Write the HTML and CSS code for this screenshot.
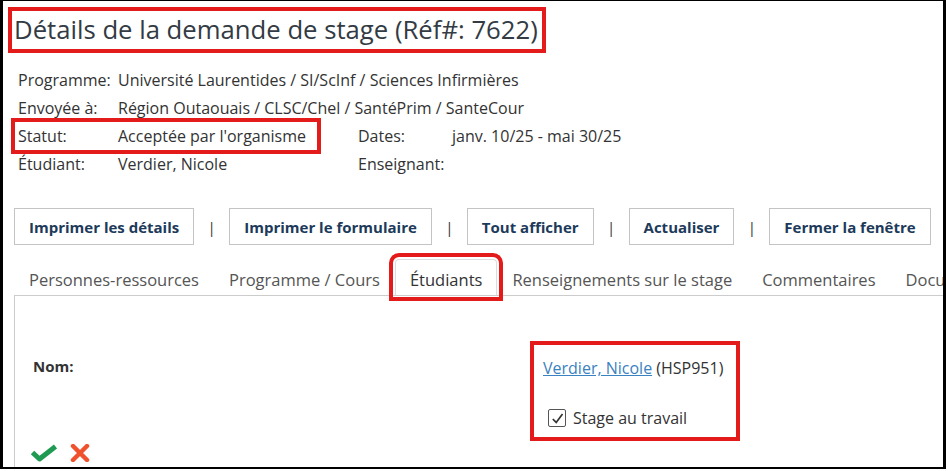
FILE: index.html
```html
<!DOCTYPE html>
<html lang="fr">
<head>
    <meta charset="UTF-8">
    <title>Détails de la demande de stage</title>
    <link rel="stylesheet" href="styles.css">
</head>
<body>
    <div class="frame">
        <h1 class="title"><span class="hl">Détails de la demande de stage (Réf#: 7622)</span></h1>

        <div class="info">
            <div class="row">
                <span class="lbl">Programme:</span>
                <span>Université Laurentides / SI/ScInf / Sciences Infirmières</span>
            </div>
            <div class="row">
                <span class="lbl">Envoyée à:</span>
                <span>Région Outaouais / CLSC/Chel / SantéPrim / SanteCour</span>
            </div>
            <div class="row">
                <div class="col hl statut">
                    <span class="lbl">Statut:</span>
                    <span>Acceptée par l'organisme</span>
                </div>
                <span class="lbl2">Dates:</span>
                <span>janv. 10/25 - mai 30/25</span>
            </div>
            <div class="row">
                <div class="col">
                    <span class="lbl">Étudiant:</span>
                    <span>Verdier, Nicole</span>
                </div>
                <span class="lbl2">Enseignant:</span>
                <span></span>
            </div>
        </div>

        <div class="actions">
            <button>Imprimer les détails</button>
            <span class="sep">|</span>
            <button>Imprimer le formulaire</button>
            <span class="sep">|</span>
            <button>Tout afficher</button>
            <span class="sep">|</span>
            <button>Actualiser</button>
            <span class="sep">|</span>
            <button>Fermer la fenêtre</button>
        </div>

        <ul class="tabs">
            <li>Personnes-ressources</li>
            <li>Programme / Cours</li>
            <li class="active hl">Étudiants</li>
            <li>Renseignements sur le stage</li>
            <li>Commentaires</li>
            <li>Documents</li>
        </ul>

        <div class="panel">
            <div class="field">
                <span class="field-lbl">Nom:</span>
                <div class="field-val hl">
                    <p><a href="#">Verdier, Nicole</a> (HSP951)</p>
                    <label class="check">
                        <span class="box">
                            <svg width="13" height="13" viewBox="0 0 13 13"><path d="M1.8 7 L5.2 10.4 L11.5 2" fill="none" stroke="#333" stroke-width="1.7"/></svg>
                        </span>
                        Stage au travail
                    </label>
                </div>
            </div>
            <div class="icons">
                <svg width="28" height="18" viewBox="0 0 28 18"><path d="M2.5 8.5 L9.5 15 L25.5 2.5" fill="none" stroke="#1f9a52" stroke-width="5" stroke-linejoin="round"/></svg>
                <svg width="20" height="18" viewBox="0 0 20 18"><path d="M3 2 L17 16 M17 2 L3 16" fill="none" stroke="#f0522e" stroke-width="4.5" stroke-linecap="round"/></svg>
            </div>
        </div>
    </div>
</body>
</html>
```

FILE: styles.css
```css
body {
    margin: 0;
    font-family: "Open Sans", sans-serif;
    color: #333;
    background: #fff;
}
.frame {
    width: 940px;
    height: 466px;
    border-style: solid;
    border-color: #000;
    border-width: 1px 3px 2px 3px;
    overflow: hidden;
}
.hl {
    outline: 4px solid #e31b1b;
}
.title {
    margin: 12px 0 0 11px;
    font-size: 25.7px;
    font-weight: normal;
    line-height: 34px;
    color: #333b44;
}
.title .hl {
    display: inline-block;
    padding-right: 2px;
    outline-offset: 2px;
}
.info {
    margin: 19px 0 0 15px;
    font-size: 16px;
}
.row {
    display: flex;
    height: 28px;
    align-items: center;
    white-space: nowrap;
}
.lbl {
    display: inline-block;
    width: 100px;
}
.col {
    width: 340px;
    display: flex;
    align-items: center;
}
.statut {
    width: 296px;
    margin-right: 44px;
    outline-offset: 3px;
}
.lbl2 {
    display: inline-block;
    width: 94px;
}
.actions {
    display: flex;
    align-items: center;
    margin: 30px 0 0 11px;
}
.actions button {
    height: 37px;
    padding: 0 14px;
    background: #fff;
    border: 1px solid #c4c4c4;
    font-family: inherit;
    font-size: 15px;
    font-weight: bold;
    color: #1d3a5a;
}
.sep {
    width: 35px;
    text-align: center;
    color: #333;
    font-size: 15px;
}
.tabs {
    list-style: none;
    display: flex;
    margin: 14px 0 0 11px;
    padding: 0;
    font-size: 16.5px;
    line-height: 22px;
    color: #555;
    white-space: nowrap;
}
.tabs li {
    padding: 9px 14px 4px;
    border: 1px solid transparent;
    border-bottom: none;
}
.tabs .active {
    border-color: #ddd;
    border-radius: 4px 4px 0 0;
    color: #333;
    outline-offset: 2px;
}
.panel {
    margin-left: 11px;
    border-top: 1px solid #ccc;
    border-left: 1px solid #ccc;
    height: 200px;
    padding: 0 0 0 18px;
}
.field {
    display: flex;
    padding-top: 45px;
}
.field-lbl {
    width: 497px;
    font-size: 15px;
    font-weight: bold;
    line-height: 22px;
    padding-top: 14px;
}
.field-val {
    width: 210px;
    height: 100px;
    padding: 16px 0 0 13px;
    font-size: 16px;
    line-height: 22px;
    outline-offset: -4px;
    box-sizing: border-box;
}
.field-val p {
    margin: 0 0 28px 0;
}
.field-val a {
    color: #3a82c0;
}
.check {
    display: flex;
    align-items: center;
    gap: 7px;
    margin-left: 5px;
}
.box {
    width: 16px;
    height: 16px;
    border: 1px solid #555;
    border-radius: 2px;
    display: flex;
    align-items: center;
    justify-content: center;
}
.icons {
    display: flex;
    gap: 12px;
    align-items: center;
    margin: 3px 0 0 -3px;
}
```
